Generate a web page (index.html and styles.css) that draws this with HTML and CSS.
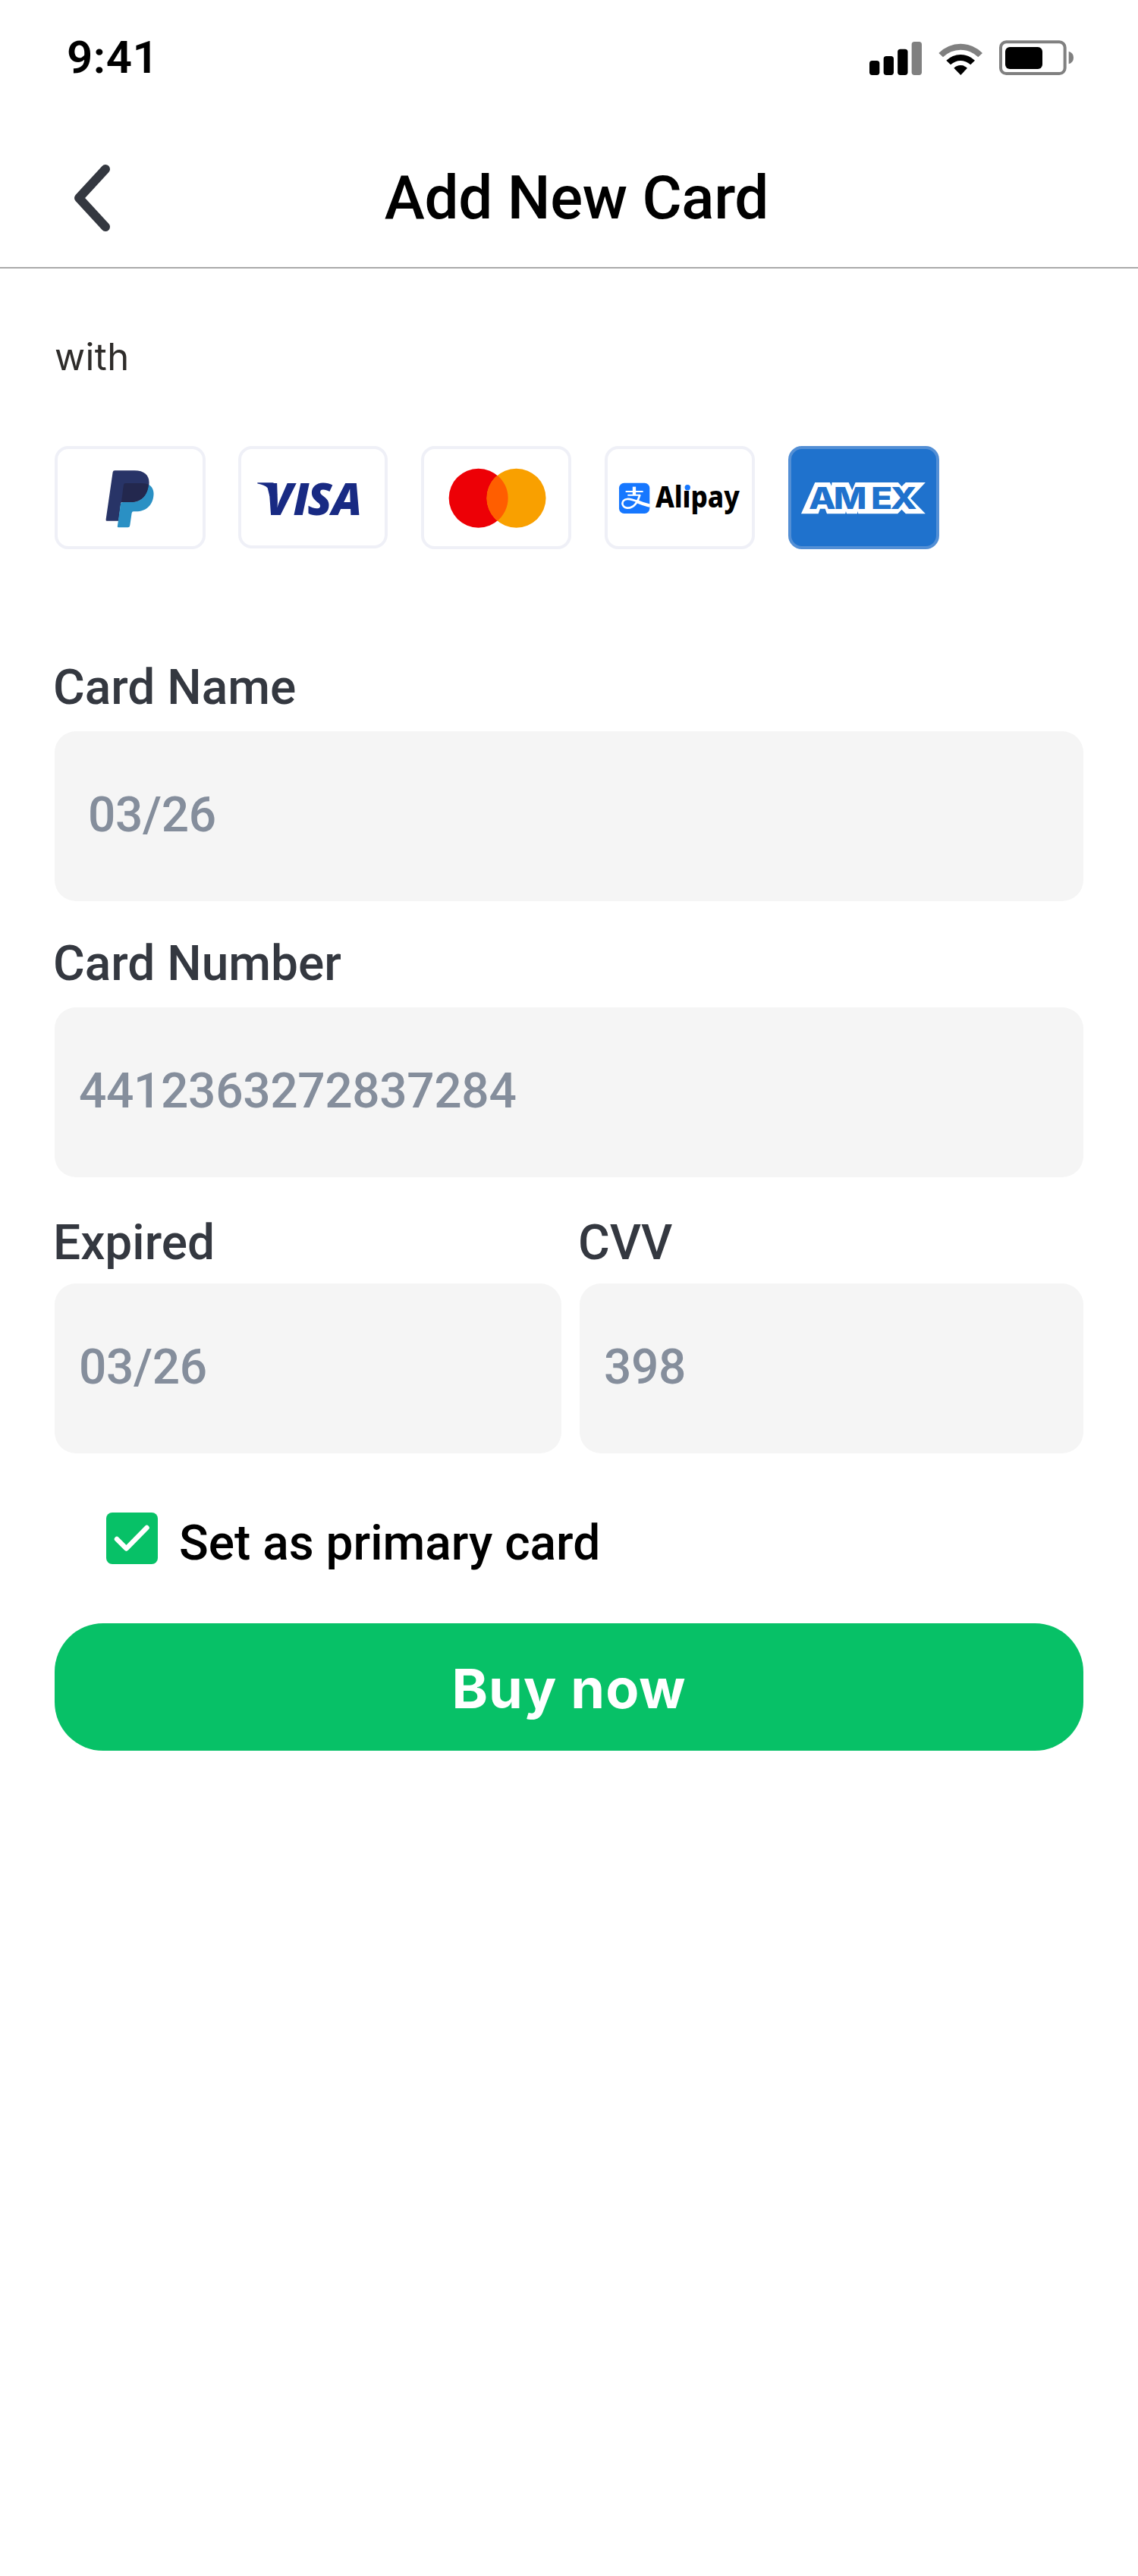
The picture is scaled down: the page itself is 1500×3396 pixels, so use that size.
FILE: index.html
```html
<!DOCTYPE html>
<html lang="en">
<head>
<meta charset="utf-8">
<title>Add New Card</title>
<link rel="stylesheet" href="styles.css">
</head>
<body>
<div class="status">
  <span class="time">9:41</span>
  <svg class="status-icons" viewBox="78 66 810 144" aria-hidden="true">
    <rect x="78" y="150" width="40" height="57" rx="11"/>
    <rect x="134" y="132" width="40" height="75" rx="11"/>
    <rect x="189.500" y="104" width="40" height="103" rx="11"/>
    <rect x="245" y="75" width="40" height="132" rx="11" fill="#808080"/>
    <path d="M352 120A121 121 0 0 1 525 120L508 136A98 98 0 0 0 369 136Z" fill="#808080"/>
    <path d="M382 149A80 80 0 0 1 495 149L478 166A57 57 0 0 0 399 166Z"/>
    <path d="M412 179A38 38 0 0 1 465 179L439 207Z"/>
    <rect x="597" y="76" width="254" height="125" rx="22" fill="none" stroke="#808080" stroke-width="12"/>
    <rect x="615" y="96" width="147" height="87" rx="18"/>
    <path d="M866 113Q885 118 885 138T866 163Z" fill="#808080"/>
  </svg>
</div>
<header class="header">
  <svg class="back" viewBox="0 0 48 88" aria-label="Back"><path d="M42 6L7 44L42 82" fill="none" stroke="#343840" stroke-width="12" stroke-linecap="round" stroke-linejoin="round"/></svg>
  <h1 class="title">Add New Card</h1>
</header>
<main class="content">
  <p class="with">with</p>
  <div class="methods">
    <div class="method">
      <svg viewBox="36 54 596 408">
        <path d="M274 151H352C390 151 410 169 410 198C410 245 383 276 338 276H303Q299 276 298 281L289 350H242Q238 350 239 344L266 158Q267 151 274 151Z" fill="#283467"/>
        <path d="M408 206C421 214 428 226 428 243C427 288 397 313 358 313H348Q342 313 341 320L334 368Q333 376 326 376H288Q283 376 285 370L297 284Q298 276 306 276H338C380 276 404 248 408 206Z" fill="#2a90c4"/>
        <path d="M317 201H380Q398 201 408 206C404 248 380 276 338 276H300L309 207Q310 201 317 201Z" fill="#23284e"/>
      </svg>
    </div>
    <div class="method visa">
      <svg viewBox="42 54 590 404">
        <path d="M118 199H178Q188 200 191 212L196 248L166 252L158 220Q146 208 118 203Z" fill="#182a83"/>
        <text class="visa-text" x="149 260 316 412" y="326">VISA</text>
      </svg>
    </div>
    <div class="method">
      <svg viewBox="42 54 596 408">
        <circle cx="269" cy="260" r="117" fill="#ed0006"/>
        <circle cx="419" cy="260" r="117" fill="#f9a000"/>
        <path d="M344 170A117 117 0 0 1 344 350A117 117 0 0 1 344 170Z" fill="#ff5e00"/>
      </svg>
    </div>
    <div class="method">
      <svg viewBox="51 54 596 408">
        <rect x="108" y="200" width="121" height="121" rx="20" fill="#1677ff"/>
        <g fill="none" stroke="#fff">
          <path d="M168 215V247" stroke-width="13"/>
          <path d="M134 234H203M142 248H193" stroke-width="6"/>
          <path d="M190 248C184 272 168 301 140 299C116 296 114 267 140 264C164 261 190 282 230 291" stroke-width="8"/>
          <path d="M176 272Q202 283 229 290" stroke-width="13"/>
        </g>
        <text class="alipay-text" x="252" y="297" textLength="333" lengthAdjust="spacingAndGlyphs">Alipay</text>
        <rect x="364" y="200" width="29" height="30" fill="#fff"/>
        <circle cx="379" cy="218" r="11" fill="#1677ff"/>
      </svg>
    </div>
    <div class="method amex">
      <svg viewBox="57 54 596 408">
        <path d="M108 322L163 198H222L228 212L230 198H296L310 229L323 198H492L506 214L522 198H600L541 261L600 322H522L506 305L490 322H334L332 312L330 322H288L285 312L283 322H210L203 302H183L176 322Z" fill="#fff"/>
        <text class="amex-text" transform="scale(1.16 1)" x="119 204 331 397" y="303">AMEX</text>
      </svg>
    </div>
  </div>
  <form class="form">
    <div class="field">
      <label class="label">Card Name</label>
      <div class="input input-wide">03/26</div>
    </div>
    <div class="field">
      <label class="label">Card Number</label>
      <div class="input">4412363272837284</div>
    </div>
    <div class="pair">
      <div class="field">
        <label class="label">Expired</label>
        <div class="input">03/26</div>
      </div>
      <div class="field">
        <label class="label">CVV</label>
        <div class="input">398</div>
      </div>
    </div>
    <div class="primary">
      <svg class="check" viewBox="0 0 68 68" aria-hidden="true"><rect width="68" height="68" rx="8" fill="#07c167"/><path d="M14 35L26.500 47.500L53.500 20" fill="none" stroke="#fff" stroke-width="6.500" stroke-linecap="round" stroke-linejoin="round"/></svg>
      <span class="primary-text">Set as primary card</span>
    </div>
    <button class="buy" type="button">Buy now</button>
  </form>
</main>
</body>
</html>
```
FILE: styles.css
```css
* { box-sizing: border-box; }

body {
  margin: 0;
  min-height: 3396px;
  background: #fff;
  color: #000;
  font-family: Roboto, "Liberation Sans", sans-serif;
  font-weight: 500;
}

.status {
  display: flex;
  justify-content: space-between;
  align-items: flex-start;
  height: 150px;
  padding: 46px 84px 0 88px;
}

.time { font-size: 60px; font-weight: 600; line-height: 60px; letter-spacing: 0.500px; }
.status-icons { width: 270px; height: 48px; margin-top: 6px; }

.header {
  display: grid;
  grid-template-columns: 240px 1fr 240px;
  height: 204px;
  padding: 65px 0 0 20px;
  border-bottom: 2px solid #aaa;
}

.back { width: 48px; height: 88px; margin: 2px 0 0 77px; }

.title {
  margin: 0;
  font-size: 80px;
  font-weight: 500;
  letter-spacing: -0.300px;
  line-height: 92px;
  text-align: center;
}

.content { padding: 81px 72px 0; }

.with {
  margin: 0;
  color: #2e2c2a;
  font: 400 49px/72px Inter, sans-serif;
  letter-spacing: 0.400px;
}

.methods {
  display: flex;
  gap: 43.750px;
  height: 136px;
  margin-top: 81px;
}

.method {
  width: 198.500px;
  height: 136px;
  border: 4px solid #eff0f7;
  border-radius: 18px;
}

.method svg { display: block; width: 198.500px; height: 136px; margin: -4px; }
.visa { width: 196.500px; height: 134.500px; }
.visa svg { width: 196.500px; height: 134.500px; }
.amex { border-color: #538fd5; background: #1f72cd; }

.visa-text { fill: #182a83; font: italic 800 178px "Open Sans", sans-serif; }
.alipay-text { fill: #000; font: 800 118px "Noto Sans", sans-serif; }
.amex-text { fill: #1f72cd; font: 800 120px Inter, sans-serif; }

.form { padding-top: 147px; }
.field { margin-bottom: 47px; }

.label {
  display: block;
  margin: 0 0 21px -2px;
  color: #343840;
  font-size: 64px;
  line-height: 72px;
}

.input {
  display: flex;
  align-items: center;
  height: 224px;
  padding: 0 32px 4px;
  border-radius: 28px;
  background: #f5f5f5;
  color: #858e9c;
  font-size: 64px;
  letter-spacing: -0.350px;
}

.input-wide { padding-left: 44px; }

.pair {
  display: grid;
  grid-template-columns: 668px 664px;
  gap: 24px;
  padding-top: 4px;
}

.pair .label { margin-bottom: 17px; }
.pair .field { margin-bottom: 0; }

.primary {
  display: flex;
  gap: 28px;
  height: 76px;
  margin: 78px 0 70px 68px;
}

.check { width: 68px; height: 68px; }
.primary-text { margin-top: 5px; font-size: 64px; line-height: 72px; }

.buy {
  display: block;
  width: 100%;
  height: 168px;
  padding: 2px 0 0;
  border: 0;
  border-radius: 64px;
  background: #07c167;
  color: #fff;
  font: 650 72px Inter, sans-serif;
  letter-spacing: 1px;
}
```
